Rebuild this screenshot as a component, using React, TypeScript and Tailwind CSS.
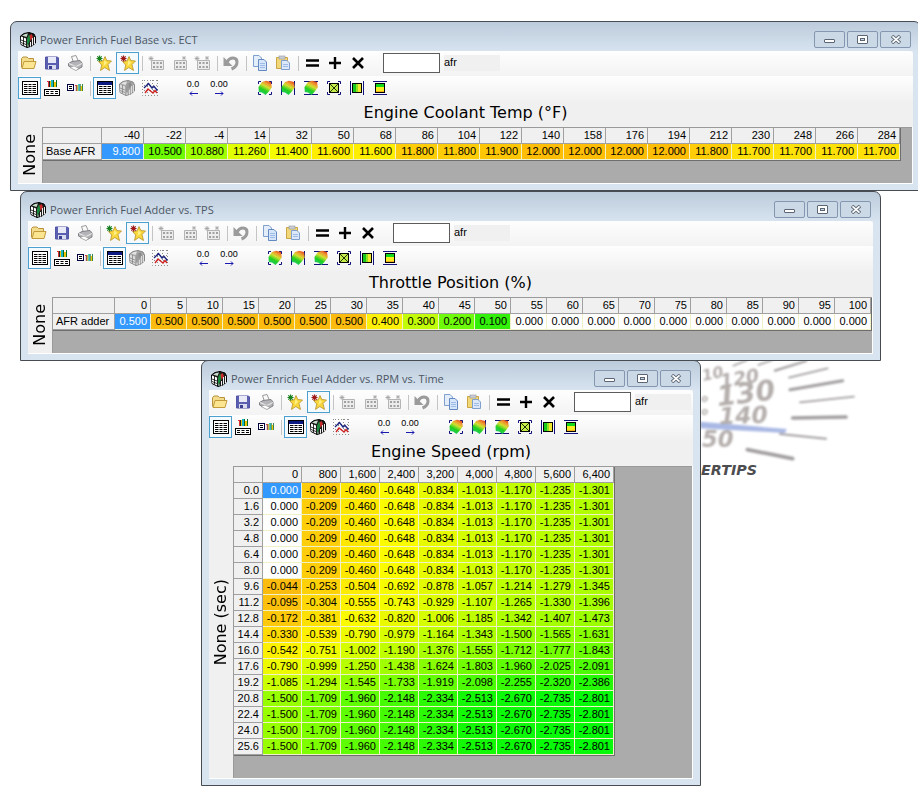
import React from "react";

type Stop = [number, number, number, number];

const AFR_STOPS: Stop[] = [
  [10.5, 110, 250, 0],
  [10.88, 160, 255, 0],
  [11.26, 225, 255, 0],
  [11.4, 245, 252, 0],
  [11.6, 255, 238, 0],
  [11.7, 255, 225, 10],
  [11.8, 255, 205, 8],
  [11.9, 255, 198, 5],
  [12.0, 255, 190, 5],
];

const TPS_STOPS: Stop[] = [
  [0.1, 50, 240, 10],
  [0.2, 110, 250, 10],
  [0.3, 195, 252, 10],
  [0.4, 255, 240, 10],
  [0.5, 252, 188, 15],
];

const RPM_STOPS: Stop[] = [
  [-2.801, 5, 250, 10],
  [-2.5, 20, 248, 5],
  [-2.148, 70, 252, 5],
  [-1.709, 125, 255, 0],
  [-1.301, 178, 255, 0],
  [-1.013, 212, 255, 0],
  [-0.834, 232, 250, 0],
  [-0.648, 252, 252, 0],
  [-0.46, 255, 232, 0],
  [-0.209, 255, 205, 10],
  [-0.044, 252, 188, 15],
];

function shade(stops: Stop[], v: number): string {
  if (v === 0) return "#ffffff";
  const last = stops[stops.length - 1];
  if (v <= stops[0][0]) return `rgb(${stops[0].slice(1).join(",")})`;
  for (let i = 1; i < stops.length; i++) {
    const a = stops[i - 1];
    const b = stops[i];
    if (v <= b[0]) {
      const t = (v - a[0]) / (b[0] - a[0]);
      return `rgb(${[1, 2, 3].map((k) => Math.round(a[k] + (b[k] - a[k]) * t)).join(",")})`;
    }
  }
  return `rgb(${last.slice(1).join(",")})`;
}

/* ---------- icons ---------- */

const Svg = ({ children, w = 16, h = 16 }: { children: React.ReactNode; w?: number; h?: number }) => (
  <svg width={w} height={h} viewBox={`0 0 ${w} ${h}`} aria-hidden="true">
    {children}
  </svg>
);

const Folder = () => (
  <Svg>
    <path d="M.5 12.500V3.500L2 2h4l1.500 1.500h5V6" fill="#f3dc8c" stroke="#b8923a" />
    <path d="M1 13.500 3 6.500h12l-2 7Z" fill="#fbe590" stroke="#c29b3c" />
  </Svg>
);
const Floppy = () => (
  <Svg>
    <path d="M1.500 2h12l1 1v11h-13Z" fill="#5b5fb0" stroke="#5155a8" />
    <rect x="4" y="2" width="8" height="6" fill="#e8ebf7" />
    <rect x="4" y="10" width="8" height="4" fill="#d8dcee" />
    <rect x="5" y="11" width="3" height="3" fill="#3b3f90" />
  </Svg>
);
const Printer = () => (
  <Svg>
    <path d="M4.500 1.500 9 .5l2.500 6-5 1Z" fill="#fafafa" stroke="#999" />
    <path d="M1.500 8.500 5 6.500l8-1 2 2.500v4l-6 3-7.500-4Z" fill="#b4b4b8" stroke="#808086" />
    <path d="m2 8.500 7 3 6-3" fill="none" stroke="#eee" />
    <path d="m3 12.500 6 3 3-2-5-2.500Z" fill="#fff" stroke="#888" strokeWidth=".6" />
  </Svg>
);
const StarIcon = ({ mark }: { mark: string }) => (
  <Svg>
    <path d="m9 1.500 1.800 4 4.700.5-3.500 3.500 1.500 6-4.700-3L4.500 15.500l1.200-5.500L2.500 6.500l4.700-.7Z" fill="#f8d83c" stroke="#b8902a" strokeWidth=".8" />
    <path d="m8.500 5-1 6 3.500-3Z" fill="#fff08c" />
    <path d="M3.500.5v6M.5 3.500h6M1.300 1.300l4.400 4.400M5.700 1.300 1.300 5.700" stroke={mark} strokeWidth="1.200" />
  </Svg>
);
const GridAdd = ({ mark }: { mark: "left" | "mid" | "both" }) => (
  <Svg>
    <path d="M3.500 5.500h12v9h-12Z" fill="#ececec" stroke="#b4b4b4" />
    <path d="M5 8h2M8.500 8h2M12 8h2M5 12h2M8.500 12h2M12 12h2" stroke="#a0a0a0" strokeWidth="2" />
    {mark !== "mid" && <path d="M3 1v5M.5 3.500h5M1.200 1.700l3.600 3.600M4.800 1.700 1.200 5.300" stroke="#a0a0a0" strokeWidth=".8" />}
    {mark !== "left" && <path d="M13 1v4M11 3h4M11.500 1.500l3 3M14.500 1.500l-3 3" stroke="#a8a8a8" strokeWidth=".8" />}
  </Svg>
);
const Undo = () => (
  <Svg>
    <path d="M4 7C7 1.500 14 2 14 7c0 3.500-3 6-5.500 7" fill="none" stroke="#9b9b9b" strokeWidth="3" />
    <path d="M.5 2v9h9Z" fill="#9b9b9b" />
  </Svg>
);
const CopyIcon = () => (
  <Svg>
    <path d="M1.500.5H7L9.500 3v8.500h-8Z" fill="#e4eefb" stroke="#7f9fcf" />
    <path d="M6.500 4.500H12L14.500 7v8.500h-8Z" fill="#d5e5fa" stroke="#6488c2" />
    <path d="M8 8.500h5M8 10.500h5M8 12.500h5" stroke="#9dbbe6" />
  </Svg>
);
const PasteIcon = () => (
  <Svg>
    <path d="M1.500 2.500h11v11h-11Z" fill="#f2d878" stroke="#c9a545" />
    <rect x="4" y="1" width="6" height="3" fill="#c9cdd6" stroke="#9297a3" strokeWidth=".6" />
    <path d="M6.500 5.500H12L14.500 8v6.500h-8Z" fill="#dce8fa" stroke="#7f9fcf" />
    <path d="M8 9.500h5M8 11.500h5" stroke="#9dbbe6" />
  </Svg>
);
const EqualsIcon = () => (
  <Svg>
    <path d="M2 5.500h13M2 10.500h13" stroke="#000" strokeWidth="2.400" />
  </Svg>
);
const PlusIcon = () => (
  <Svg>
    <path d="M2 8h12M8 2v12" stroke="#000" strokeWidth="2.400" />
  </Svg>
);
const TimesIcon = () => (
  <Svg>
    <path d="m3 3 10 10M13 3 3 13" stroke="#000" strokeWidth="2.600" />
  </Svg>
);
const TableIcon = () => (
  <Svg>
    <rect x=".5" y="1.500" width="15" height="13" fill="#fff" stroke="#000" />
    <path d="M2 4.500h3.500M6.500 4.500h3M10.500 4.500h3.500M2 6.500h3.500M6.500 6.500h3M10.500 6.500h3.500M2 8.500h3.500M6.500 8.500h3M10.500 8.500h3.500M2 10.500h3.500M6.500 10.500h3M10.500 10.500h3.500M2 12.500h3.500M6.500 12.500h3M10.500 12.500h3.500" stroke="#000" />
  </Svg>
);
const Bars = ({ x, y }: { x: number; y: number }) => (
  <g transform={`translate(${x} ${y})`}>
    <path d="M0 1h2v1H0ZM1 2h1v5H1Z" fill="#d33" />
    <path d="M2 1h1v6H2Z" fill="#222" />
    <path d="M4 0h2v7H4Z" fill="#1ab7c8" />
    <path d="M3 1h1v6H3ZM7 2h2v5H7Z" fill="#f0c400" />
    <path d="M6 0h1v7H6ZM9 0h1v7H9Z" fill="#0a6a2a" />
  </g>
);
const BarsOverTable = () => (
  <Svg>
    <Bars x={3} y={0} />
    <rect x=".5" y="9.500" width="15" height="6" fill="#fff" stroke="#000" />
    <path d="M2 11.500h3M6.500 11.500h3M11 11.500h3M2 13.500h3M6.500 13.500h3M11 13.500h3" stroke="#000" />
  </Svg>
);
const TableBesideBars = () => (
  <Svg>
    <rect x=".5" y="4.500" width="6" height="6" fill="#fff" stroke="#000040" />
    <path d="M2 6.500h3M2 8.500h3" stroke="#000" />
    <g transform="translate(8 4) scale(.8 1)">
      <Bars x={0} y={0} />
    </g>
  </Svg>
);
const TitledTable = () => (
  <Svg>
    <rect x=".5" y="1.500" width="15" height="13" fill="#fff" stroke="#000" />
    <rect x="1" y="2" width="14" height="3" fill="#0a1a80" />
    <path d="M2 6.500h3.500M6.500 6.500h3M10.500 6.500h3.500M2 8.500h3.500M6.500 8.500h3M10.500 8.500h3.500M2 10.500h3.500M6.500 10.500h3M10.500 10.500h3.500M2 12.500h3.500M6.500 12.500h3M10.500 12.500h3.500" stroke="#000" />
  </Svg>
);
const Cube = ({ gray = false }: { gray?: boolean }) => {
  const edge = gray ? "#858585" : "#000";
  return (
    <Svg>
      <path d="M.5 4 4 1.500 9 .5 14 2l1.500 3v6L12 14l-5 1.500-6-3Z" fill={gray ? "#a8a8a8" : "#1b1b1b"} stroke={edge} />
      <path d="M1 4.500 6 6.500v8L1 12Z" fill={gray ? "#dcdcdc" : "#fff"} />
      <path d="M3.500 5v8.500M1 8l5 2M1 10.500l5 2" stroke={edge} strokeWidth=".8" />
      <path d="M2 3.500 5 2l3-.5L6.500 5Z" fill={gray ? "#e4e4e4" : "#c8dccc"} />
      <path d="M7 6.500 9 2.500l2 2.500-2 6-2 3Z" fill={gray ? "#9a9a9a" : "#18883a"} />
      <path d="m9.500 3.500 2-1.500 1.500 3-2.500 4Z" fill={gray ? "#8c8c8c" : "#c82a2a"} />
      <path d="M12.500 6v7.500M14.500 5v7M10.500 10v4.500" stroke={gray ? "#dcdcdc" : "#f0f0f0"} />
      <path d="M8 12.500v2.500" stroke={gray ? "#dcdcdc" : "#b0d8b8"} />
    </Svg>
  );
};
const ChartIcon = () => (
  <Svg>
    <path d="M.5 0v15.500H16M2 .5h14M2 5.500h14M2 10.500h14M5.500 0v15M10.500 0v15M15.500 0v15" stroke="#8a8a8a" strokeDasharray="1 2" fill="none" />
    <path d="m3 13 3-4 2.500 2L11 13l2-2.500 2 2.500" fill="none" stroke="#d02020" strokeWidth="1.300" />
    <path d="m2 8 4.500-4.500L10 8l2-1.500 3.500 4" fill="none" stroke="#1a2280" strokeWidth="1.300" />
  </Svg>
);
const Bracket = ({ kind }: { kind: "all" | "cols" | "rows" }) => (
  <path
    d={
      kind === "all"
        ? "M4 1.500H1.500V4M12 1.500h2.500V4M4 14.500H1.500V12M12 14.500h2.500V12"
        : kind === "cols"
          ? "M1.500 1v14M14.500 1v14"
          : "M1 1.500h14M1 14.500h14"
    }
    fill="none"
    stroke="#10107a"
  />
);
const Surface = ({ kind }: { kind: "all" | "cols" | "rows" }) => (
  <Svg>
    <defs>
      <linearGradient id={`surface-${kind}`} x1=".8" y1="0" x2=".3" y2="1">
        <stop offset="0" stopColor="#e0401c" />
        <stop offset=".22" stopColor="#f09a30" />
        <stop offset=".42" stopColor="#d0e030" />
        <stop offset=".68" stopColor="#22d020" />
        <stop offset="1" stopColor="#20c870" />
      </linearGradient>
    </defs>
    <Bracket kind={kind} />
    <path d="M1.500 7 5 2 9 .8l5 1.200.8 5.500-3 4-3.300 3.500L5 12.500 1.800 12Z" fill={`url(#surface-${kind})`} />
  </Svg>
);
const Flat = ({ kind }: { kind: "all" | "cols" | "rows" }) => (
  <Svg>
    <Bracket kind={kind} />
    {kind === "all" && (
      <>
        <rect x="3.500" y="3.500" width="9" height="9" fill="#c4ee4a" stroke="#000" />
        <path d="m4 4 8 8M12 4l-8 8" stroke="#000" strokeWidth=".8" />
      </>
    )}
    {kind === "cols" && (
      <>
        <rect x="3.500" y="3.500" width="9" height="9" fill="#f2e830" stroke="#000" />
        <rect x="4" y="4" width="3" height="8" fill="#14c81c" />
        <rect x="7" y="4" width="2" height="8" fill="#90e020" />
      </>
    )}
    {kind === "rows" && (
      <>
        <rect x="3.500" y="3.500" width="9" height="9" fill="#f6ee20" stroke="#000" />
        <rect x="4" y="4" width="8" height="3" fill="#14d81c" />
        <rect x="4" y="11" width="8" height="1" fill="#f0b020" />
      </>
    )}
  </Svg>
);
const Decimals = ({ label, left }: { label: string; left?: boolean }) => (
  <span className="flex flex-col items-center gap-[2px] font-['Liberation_Sans',sans-serif] text-[9px] leading-[9px] text-black">
    {label}
    <svg width="9" height="5" viewBox="0 0 9 5" aria-hidden="true">
      <path d={left ? "M1 2.500h8M3 .5l-2 2 2 2" : "M0 2.500h8M6 .5l2 2-2 2"} fill="none" stroke="#1a1ab0" />
    </svg>
  </span>
);

/* ---------- window parts ---------- */

const Tool = ({ label, on, children }: { label: string; on?: boolean; children: React.ReactNode }) => (
  <button
    type="button"
    aria-label={label}
    className={
      on
        ? "flex h-[22px] w-[23px] items-center justify-center border border-[#4ba0d0] bg-[#f4fafd]"
        : "flex h-[22px] w-[23px] items-center justify-center pr-px"
    }
  >
    {children}
  </button>
);

const Divider = () => (
  <span className="flex w-[6px] justify-center">
    <span className="h-[15px] w-px bg-[#c4c4c4]" />
  </span>
);

const CaptionButton = ({ label, children }: { label: string; children: React.ReactNode }) => (
  <button
    type="button"
    aria-label={label}
    className="flex h-[17px] w-[31px] items-center justify-center rounded-[2px] border border-[#8496b0] bg-[#cbd8e6]"
  >
    {children}
  </button>
);

function Toolbars({ id, surfaceReady }: { id: string; surfaceReady: boolean }) {
  return (
    <>
      <div className="flex h-[25px] items-center rounded-r-sm bg-linear-to-b from-[#fefefe] to-[#f3f3f3] pb-px">
        <Tool label="Open"><Folder /></Tool>
        <Tool label="Save"><Floppy /></Tool>
        <Tool label="Print"><Printer /></Tool>
        <Divider />
        <Tool label="Add favorite"><StarIcon mark="#17801f" /></Tool>
        <Tool label="Remove favorite" on><StarIcon mark="#a01818" /></Tool>
        <Divider />
        <Tool label="Insert column"><GridAdd mark="left" /></Tool>
        <Tool label="Insert row"><GridAdd mark="mid" /></Tool>
        <Tool label="Insert both"><GridAdd mark="both" /></Tool>
        <Divider />
        <Tool label="Undo"><Undo /></Tool>
        <Divider />
        <Tool label="Copy"><CopyIcon /></Tool>
        <Tool label="Paste"><PasteIcon /></Tool>
        <Divider />
        <Tool label="Set value"><EqualsIcon /></Tool>
        <Tool label="Add value"><PlusIcon /></Tool>
        <Tool label="Multiply value"><TimesIcon /></Tool>
        <input
          id={id}
          type="text"
          className="ml-[13px] h-[20px] w-[57px] border border-[#5c5c5c] bg-white px-1 text-[11px] outline-none"
        />
        <label htmlFor={id} className="ml-[4px] h-[16px] w-[56px] bg-[#f0f0f0] text-[11px] leading-[14px] text-black">
          afr
        </label>
      </div>
      <div className="flex h-[25px] items-center bg-linear-to-b from-[#fefefe] to-[#f1f1f1] pb-px">
        <Tool label="Table view" on><TableIcon /></Tool>
        <Tool label="Chart above table"><BarsOverTable /></Tool>
        <Tool label="Chart beside table"><TableBesideBars /></Tool>
        <Divider />
        <Tool label="Data table" on><TitledTable /></Tool>
        <Tool label="3D surface"><Cube gray={!surfaceReady} /></Tool>
        <Tool label="2D chart"><ChartIcon /></Tool>
        <button type="button" className="ml-[18px] w-[26px]"><Decimals label="0.0" left /></button>
        <button type="button" className="mr-[22px] w-[26px]"><Decimals label="0.00" /></button>
        <Tool label="Interpolate surface"><Surface kind="all" /></Tool>
        <Tool label="Interpolate surface columns"><Surface kind="cols" /></Tool>
        <Tool label="Interpolate surface rows"><Surface kind="rows" /></Tool>
        <Tool label="Interpolate corners"><Flat kind="all" /></Tool>
        <Tool label="Interpolate columns"><Flat kind="cols" /></Tool>
        <Tool label="Interpolate rows"><Flat kind="rows" /></Tool>
      </div>
    </>
  );
}

type Row = { name: string; values: number[] };

type WindowProps = {
  id: string;
  title: string;
  place: string;
  axis: string;
  side: string;
  columns: string[];
  rows: Row[];
  stops: Stop[];
  headWidth: string;
  cellWidth: string;
  surfaceReady?: boolean;
  nameAlign: string;
};

function TableWindow(p: WindowProps) {
  return (
    <section
      className={`absolute flex flex-col rounded-t-[7px] border border-[#474b52] bg-linear-to-b from-[#bccbdb] to-[#d8e4f0] bg-[length:100%_30px] bg-no-repeat bg-[#d8e4f0] px-[7px] pb-[6px] font-['Liberation_Sans',sans-serif] ${p.place}`}
    >
      <header className="flex h-[29px] items-center pr-[2px] pt-[6px]">
        <span className="ml-[2px] mr-[4px]"><Cube /></span>
        <h2 className="flex-1 font-['Open_Sans','Noto_Sans',sans-serif] text-[11px] leading-[16px] text-[#4c5664]">{p.title}</h2>
        <div className="flex gap-[2px]">
          <CaptionButton label="Minimize">
            <svg width="11" height="9" viewBox="0 0 11 9"><rect x=".5" y="4.500" width="10" height="3" rx=".5" fill="#fff" stroke="#5b6574" /></svg>
          </CaptionButton>
          <CaptionButton label="Maximize">
            <svg width="11" height="9" viewBox="0 0 11 9">
              <rect x=".5" y=".5" width="10" height="8" rx=".5" fill="#fff" stroke="#5b6574" />
              <rect x="3.500" y="3.500" width="4" height="2" fill="#cbd8e6" stroke="#5b6574" />
            </svg>
          </CaptionButton>
          <CaptionButton label="Close">
            <svg width="12" height="9" viewBox="0 0 12 9">
              <path d="m2 1 8 7M10 1 2 8" stroke="#5b6574" strokeWidth="3.600" />
              <path d="m2.500 1.400 7 6.200M9.500 1.400 2.500 7.600" stroke="#fff" strokeWidth="1.800" />
            </svg>
          </CaptionButton>
        </div>
      </header>
      <div className="flex flex-1 flex-col bg-[#f0f0f0]">
        <Toolbars id={p.id} surfaceReady={!!p.surfaceReady} />
        <h3 className="h-[26px] text-center font-['DejaVu_Sans',sans-serif] text-[16px] leading-[24px] text-black">{p.axis}</h3>
        <div className="flex flex-1 border-b border-r border-white">
          <div className="flex w-[24px] items-center justify-center">
            <span className="rotate-180 whitespace-nowrap font-['DejaVu_Sans',sans-serif] text-[16px] leading-[20px] text-black [writing-mode:vertical-rl]">
              {p.side}
            </span>
          </div>
          <div className="flex-1 border-l border-t border-[#9a9a9a] bg-[#ababab] pb-[22px]">
            <table className="table-fixed border-separate border-spacing-0 border-b border-r border-[#6e6e6e] text-right font-['Liberation_Sans',sans-serif] text-[11px] leading-[15px] text-black">
              <thead>
                <tr>
                  <td className={`h-[16px] border-b border-r border-[#a0a0a0] bg-[#f0f0f0] p-0 ${p.headWidth}`} />
                  {p.columns.map((c) => (
                    <th key={c} scope="col" className={`h-[16px] border-b border-r border-[#a0a0a0] bg-[#f0f0f0] p-0 pr-[3px] text-right font-normal ${p.cellWidth}`}>
                      {c}
                    </th>
                  ))}
                </tr>
              </thead>
              <tbody>
                {p.rows.map((r, ri) => (
                  <tr key={r.name}>
                    <th scope="row" className={`h-[16px] whitespace-nowrap border-b border-r border-[#a0a0a0] bg-[#f0f0f0] p-0 px-[3px] font-normal ${p.nameAlign}`}>
                      {r.name}
                    </th>
                    {r.values.map((v, ci) =>
                      ri === 0 && ci === 0 ? (
                        <td key={ci} className="h-[16px] border-b border-r border-[#e8f0e0] bg-[#3399ff] p-0 pr-[3px] text-white">
                          {v.toFixed(3)}
                        </td>
                      ) : (
                        <td key={ci} className="h-[16px] border-b border-r border-[#f1f1c8] p-0 pr-[3px]" style={{ backgroundColor: shade(p.stops, v) }}>
                          {v.toFixed(3)}
                        </td>
                      ),
                    )}
                  </tr>
                ))}
              </tbody>
            </table>
          </div>
        </div>
      </div>
    </section>
  );
}

/* ---------- data ---------- */

const ECT = ["-40", "-22", "-4", "14", "32", "50", "68", "86", "104", "122", "140", "158", "176", "194", "212", "230", "248", "266", "284"];
const ECT_ROW = [9.8, 10.5, 10.88, 11.26, 11.4, 11.6, 11.6, 11.8, 11.8, 11.9, 12, 12, 12, 12, 11.8, 11.7, 11.7, 11.7, 11.7];

const TPS = Array.from({ length: 21 }, (_, i) => String(i * 5));
const TPS_ROW = [0.5, 0.5, 0.5, 0.5, 0.5, 0.5, 0.5, 0.4, 0.3, 0.2, 0.1, 0, 0, 0, 0, 0, 0, 0, 0, 0, 0];

const RPM = ["0", "800", "1,600", "2,400", "3,200", "4,000", "4,800", "5,600", "6,400"];
const EARLY = [0, -0.209, -0.46, -0.648, -0.834, -1.013, -1.17, -1.235, -1.301];
const LATE = [-1.5, -1.709, -1.96, -2.148, -2.334, -2.513, -2.67, -2.735, -2.801];
const RPM_ROWS: Row[] = [
  { name: "0.0", values: EARLY },
  { name: "1.6", values: EARLY },
  { name: "3.2", values: EARLY },
  { name: "4.8", values: EARLY },
  { name: "6.4", values: EARLY },
  { name: "8.0", values: EARLY },
  { name: "9.6", values: [-0.044, -0.253, -0.504, -0.692, -0.878, -1.057, -1.214, -1.279, -1.345] },
  { name: "11.2", values: [-0.095, -0.304, -0.555, -0.743, -0.929, -1.107, -1.265, -1.33, -1.396] },
  { name: "12.8", values: [-0.172, -0.381, -0.632, -0.82, -1.006, -1.185, -1.342, -1.407, -1.473] },
  { name: "14.4", values: [-0.33, -0.539, -0.79, -0.979, -1.164, -1.343, -1.5, -1.565, -1.631] },
  { name: "16.0", values: [-0.542, -0.751, -1.002, -1.19, -1.376, -1.555, -1.712, -1.777, -1.843] },
  { name: "17.6", values: [-0.79, -0.999, -1.25, -1.438, -1.624, -1.803, -1.96, -2.025, -2.091] },
  { name: "19.2", values: [-1.085, -1.294, -1.545, -1.733, -1.919, -2.098, -2.255, -2.32, -2.386] },
  { name: "20.8", values: LATE },
  { name: "22.4", values: LATE },
  { name: "24.0", values: LATE },
  { name: "25.6", values: LATE },
];

const Gauge = () => (
  <svg className="absolute left-[700px] top-[355px]" width="180" height="135" viewBox="30 0 540 405" aria-hidden="true">
    <defs>
      <filter id="haze" x="-10%" y="-10%" width="120%" height="120%">
        <feGaussianBlur stdDeviation="3" />
      </filter>
    </defs>
    <g filter="url(#haze)">
      <g stroke="#a39fa0" fill="none" strokeLinecap="round">
        <path d="m130 32 40-16M205 30l40-14" strokeWidth="5" />
        <path d="m255 47 93-29" strokeWidth="7" />
        <path d="m297 68 116-28" strokeWidth="5" />
        <path d="m300 104 158-27" strokeWidth="9" />
        <path d="m330 142 162-17" strokeWidth="5" />
        <path d="m308 189 160-3" strokeWidth="11" />
        <path d="m270 237 138 14" strokeWidth="6" />
        <path d="m172 284 136 27" strokeWidth="11" />
      </g>
      <path d="M30 200 290 222 285 234 30 220Z" fill="#a9b8e4" />
      <g fill="#b4aeac" fontFamily="DejaVu Sans" fontStyle="italic" fontWeight="bold">
        <text x="40" y="78" fontSize="46" transform="rotate(-12 40 78)">10</text>
        <text x="94" y="98" fontSize="56" transform="rotate(-9 94 98)">120</text>
        <text x="84" y="154" fontSize="84" transform="rotate(-7 84 154)">130</text>
        <text x="88" y="208" fontSize="70" transform="rotate(-2 88 208)">140</text>
        <text x="36" y="276" fontSize="68">50</text>
        <text x="34" y="142" fontSize="30">o</text>
        <text x="34" y="180" fontSize="30">o</text>
      </g>
    </g>
    <text x="33" y="360" fontSize="43" fill="#4d4d4f" fontFamily="DejaVu Sans" fontStyle="italic" fontWeight="bold">
      ERTIPS
    </text>
  </svg>
);

export default function App() {
  return (
    <main className="relative h-screen w-full overflow-hidden bg-white">
      <Gauge />
      <TableWindow
        id="ect-afr"
        title="Power Enrich Fuel Base vs. ECT"
        place="left-[10px] top-[21px] w-[911px]"
        axis="Engine Coolant Temp (°F)"
        side="None"
        columns={ECT}
        rows={[{ name: "Base AFR", values: ECT_ROW }]}
        stops={AFR_STOPS}
        headWidth="w-[59px]"
        cellWidth="w-[42px]"
        nameAlign="text-left"
      />
      <TableWindow
        id="tps-afr"
        title="Power Enrich Fuel Adder vs. TPS"
        place="left-[20px] top-[191px] w-[861px]"
        axis="Throttle Position (%)"
        side="None"
        columns={TPS}
        rows={[{ name: "AFR adder", values: TPS_ROW }]}
        stops={TPS_STOPS}
        headWidth="w-[62px]"
        cellWidth="w-[36px]"
        nameAlign="text-left"
      />
      <TableWindow
        id="rpm-afr"
        title="Power Enrich Fuel Adder vs. RPM vs. Time"
        place="left-[201px] top-[360px] w-[500px]"
        axis="Engine Speed (rpm)"
        side="None (sec)"
        columns={RPM}
        rows={RPM_ROWS}
        stops={RPM_STOPS}
        headWidth="w-[29px]"
        cellWidth="w-[39px]"
        nameAlign="text-right"
        surfaceReady
      />
    </main>
  );
}
